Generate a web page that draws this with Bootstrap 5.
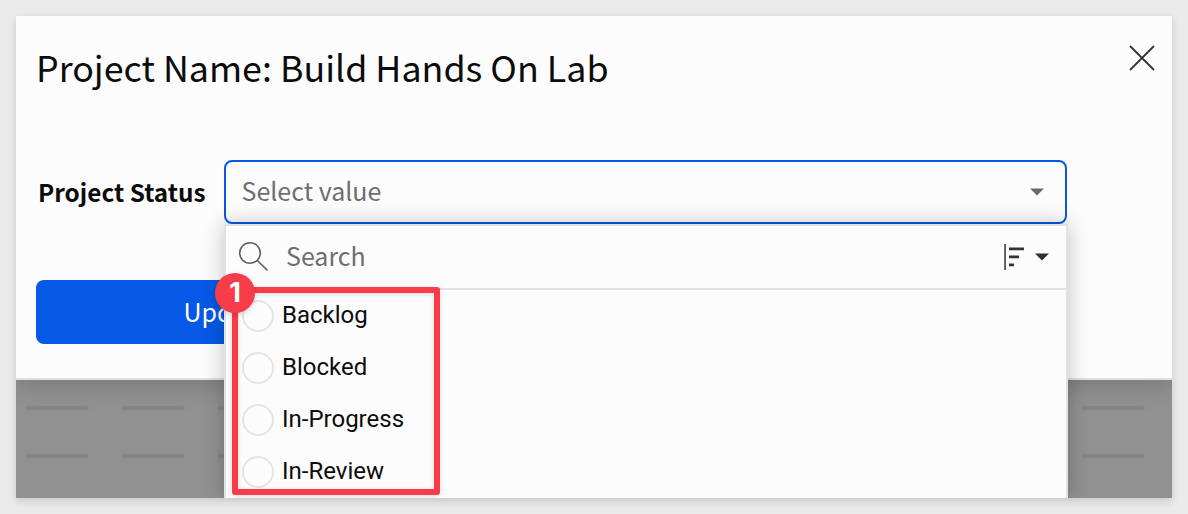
<!DOCTYPE html>
<html lang="en">
<head>
<meta charset="utf-8">
<meta name="viewport" content="width=device-width, initial-scale=1">
<title>Project Name: Build Hands On Lab</title>
<link href="https://cdn.jsdelivr.net/npm/bootstrap@5.3.0/dist/css/bootstrap.min.css" rel="stylesheet">
<style>
body{background:#eaeaea;font-family:"Noto Sans CJK SC",sans-serif;height:514px;padding:16px}
.stage{width:1156px;height:482px;background:#919191;box-shadow:0 3px 8px rgba(0,0,0,.15)}
.sheet{height:364px;background:#fcfcfc;border-bottom:2px solid #dfdfdf;box-shadow:0 4px 24px rgba(0,0,0,.18);padding:0 20px;clip-path:inset(0 0 -118px 0)}
.sheet-title{font-size:35.8px;line-height:54px;color:#0c0c0c;margin:23px 0 3px 0;font-weight:400;white-space:nowrap}
.close-x{margin-top:28px;margin-right:-4px}
.field-row{margin-top:64px;height:64px}
.field-label{width:188px;font-size:24.35px;font-weight:700;color:#0c0c0c;padding-left:2px;white-space:nowrap}
.picker{width:843px;height:64px;border:2px solid #0559e6;border-radius:8px;padding:0 21px 0 15.5px;color:#6e6e6e;font-size:25px}
.picker span{margin-top:-2px}
.picker-wrap{width:844px;height:64px}
.menu-panel{top:64px;left:0;width:844px;height:274px;background:#fcfcfc;border:2px solid #e2e2e2;border-bottom:0;box-shadow:0 0 20px rgba(0,0,0,.24);clip-path:inset(-30px -30px 0 -30px)}
.search-row{height:64px;border-bottom:2px solid #e2e2e2;padding:0 17px 0 12px;color:#6e6e6e;font-size:25px}
.search-text{margin:-2px 0 0 16px}
.sort-caret{margin-left:10px}
.option{height:52px;padding-left:16px;font:400 24px/50px Roboto,sans-serif;color:#0c0c0c}
.option b{font-weight:400;margin-top:-2px}
.ring{width:32px;height:32px;border:2px solid #e4e4e4;border-radius:50%;margin-right:8px}
.update-btn{width:400px;height:64px;margin-top:56px;background:#0559e6;border-radius:8px;color:#fff;font-size:25px;padding-left:147.5px}
.skeleton{height:118px;padding:26px 9px;gap:44px;overflow:hidden}
.skeleton-row{gap:32px}
.dash{flex:0 0 64px;height:4px;border-radius:2px;background:#868686}
.callout{left:8px;top:127px;width:208px;height:208px;border:6px solid #f83c49;border-radius:3px;box-shadow:0 1px 5px rgba(0,0,0,.14),inset 0 1px 5px rgba(0,0,0,.14)}
.callout-num{left:-9px;top:113px;width:40px;height:40px;border-radius:50%;background:#f83c49;color:#fff;font:700 27px/39px Inter,sans-serif;box-shadow:0 2px 5px rgba(0,0,0,.15)}
</style>
</head>
<body class="overflow-hidden">
<main class="stage">
  <section class="sheet position-relative">
    <header class="d-flex justify-content-between align-items-start">
      <h1 class="sheet-title">Project Name: Build Hands On Lab</h1>
      <svg class="close-x" width="28" height="28" viewBox="0 0 28 28" stroke="#333" stroke-width="1.8" fill="none"><path d="M2 2 26 26M26 2 2 26"/></svg>
    </header>
    <div class="field-row d-flex align-items-center">
      <label class="field-label flex-shrink-0">Project Status</label>
      <div class="picker-wrap position-relative">
        <div class="picker d-flex align-items-center justify-content-between">
          <span>Select value</span>
          <svg width="14" height="8" viewBox="0 0 14 8"><path d="M0 .5H14L7 7.5Z" fill="#6a6a6a"/></svg>
        </div>
        <div class="menu-panel position-absolute z-3">
          <div class="search-row d-flex align-items-center">
            <svg width="32" height="32" viewBox="0 0 32 32" fill="none" stroke="#606060" stroke-width="1.6"><circle cx="12" cy="12" r="10.3"/><path d="M19.3 19.5 29.4 29.4"/></svg>
            <span class="search-text">Search</span>
            <svg class="ms-auto" width="21" height="26" viewBox="0 0 21 26" fill="#333"><path d="M0.3 0h1.5v26H.3zM5 3.5h15v2.8H5zM5 11.5h10v2.8H5zM5 19.5h5v2.8H5z"/></svg>
            <svg class="sort-caret" width="14" height="8" viewBox="0 0 14 8"><path d="M0 .5H14L7 7.5Z" fill="#2e2e2e"/></svg>
          </div>
          <div class="option d-flex align-items-center"><span class="ring"></span><b>Backlog</b></div>
          <div class="option d-flex align-items-center"><span class="ring"></span><b>Blocked</b></div>
          <div class="option d-flex align-items-center"><span class="ring"></span><b>In-Progress</b></div>
          <div class="option d-flex align-items-center"><span class="ring"></span><b>In-Review</b></div>
        </div>
        <div class="callout position-absolute z-3"></div>
        <div class="callout-num position-absolute z-3 text-center">1</div>
      </div>
    </div>
    <div class="update-btn d-flex align-items-center">Update</div>
  </section>
  <div class="skeleton d-flex flex-column">
    <div class="skeleton-row d-flex"><i class="dash"></i><i class="dash"></i><i class="dash"></i><i class="dash"></i><i class="dash"></i><i class="dash"></i><i class="dash"></i><i class="dash"></i><i class="dash"></i><i class="dash"></i><i class="dash"></i><i class="dash"></i></div>
    <div class="skeleton-row d-flex"><i class="dash"></i><i class="dash"></i><i class="dash"></i><i class="dash"></i><i class="dash"></i><i class="dash"></i><i class="dash"></i><i class="dash"></i><i class="dash"></i><i class="dash"></i><i class="dash"></i><i class="dash"></i></div>
  </div>
</main>
<script src="https://cdn.jsdelivr.net/npm/bootstrap@5.3.0/dist/js/bootstrap.bundle.min.js"></script>
</body>
</html>
